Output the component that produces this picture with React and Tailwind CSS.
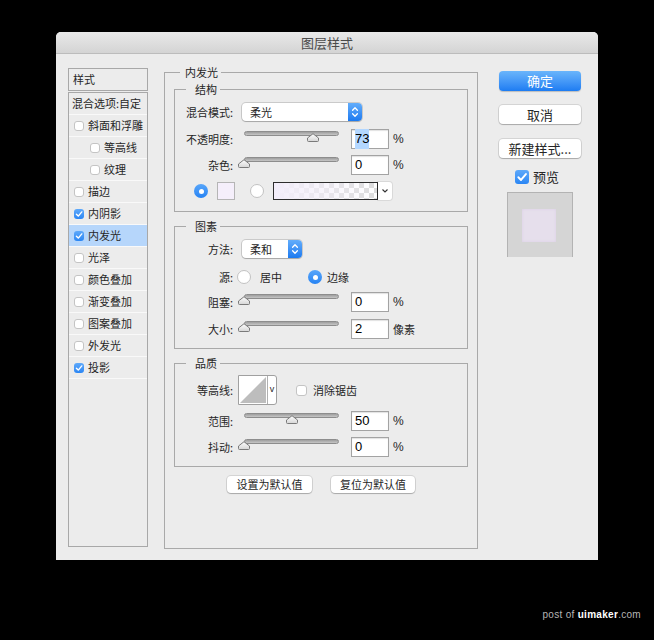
const layers = [
  { name: "斜面和浮雕" },
  { name: "等高线", indent: true },
  { name: "纹理", indent: true },
  { name: "描边" },
  { name: "内阴影", checked: true },
  { name: "内发光", checked: true, selected: true },
  { name: "光泽" },
  { name: "颜色叠加" },
  { name: "渐变叠加" },
  { name: "图案叠加" },
  { name: "外发光" },
  { name: "投影", checked: true },
];

const Check = ({ checked, size = "w-[10px] h-[10px]" }) =>
  checked ? (
    <span className={`${size} flex shrink-0 items-center justify-center rounded-[3px] bg-gradient-to-b from-[#5ea9fa] to-[#2a86f4]`}>
      <svg viewBox="0 0 10 10" className="h-full w-full">
        <path d="M2.4 5.2 L4.3 7.1 L7.8 2.9" fill="none" stroke="#fff" strokeWidth="1.4" strokeLinecap="round" strokeLinejoin="round" />
      </svg>
    </span>
  ) : (
    <span className={`${size} block shrink-0 rounded-[3px] border border-[#c4c4c4] bg-white`} />
  );

const Radio = ({ on }) =>
  on ? (
    <span className="flex h-[14px] w-[14px] shrink-0 items-center justify-center rounded-full bg-gradient-to-b from-[#58a6fa] to-[#2583f3]">
      <span className="h-[5px] w-[5px] rounded-full bg-white" />
    </span>
  ) : (
    <span className="block h-[14px] w-[14px] shrink-0 rounded-full border border-[#c2c2c2] bg-white" />
  );

const Label = ({ children }) => (
  <span className="flex w-[47px] shrink-0 justify-end whitespace-nowrap">{children}</span>
);

const Thumb = () => (
  <svg width="12" height="9" viewBox="0 0 12 9">
    <defs>
      <linearGradient id="thumb" x1="0" y1="0" x2="0" y2="1">
        <stop offset="0" stopColor="#fefefe" />
        <stop offset="1" stopColor="#d6d6d6" />
      </linearGradient>
    </defs>
    <path d="M1.5 8.5 Q0.5 8.5 0.5 7.5 V5 L6 0.7 L11.5 5 V7.5 Q11.5 8.5 10.5 8.5 Z" fill="url(#thumb)" stroke="#7a7a7a" strokeWidth="1" />
  </svg>
);

const Slider = ({ value }) => (
  <div className="relative ml-[11px] h-[20px] w-[95px] shrink-0">
    <div className="mt-[2px] h-[5px] rounded-full border border-[#8d8d8d] bg-gradient-to-b from-[#9e9e9e] to-[#c6c6c6]" />
    <div className="absolute top-[4px]" style={{ left: value * 0.95 - 6 }}>
      <Thumb />
    </div>
  </div>
);

const Field = ({ value, selected }) => (
  <div className="ml-[12px] flex h-[20px] w-[38px] shrink-0 items-center border border-[#a3a3a3] bg-white pl-[3px] font-['Liberation_Sans',sans-serif] text-[13px] text-black shadow-[inset_0_1px_1px_rgba(0,0,0,0.12)]">
    <span className={selected ? "bg-[#b3d7ff]" : ""}>{value}</span>
  </div>
);

const Percent = () => <span className="ml-[4px] font-['Liberation_Sans',sans-serif] text-[12px]">%</span>;

const Stepper = () => (
  <span className="flex w-[14px] items-center justify-center rounded-r-[4px] bg-gradient-to-b from-[#62adfb] to-[#1a7af0]">
    <svg width="14" height="18" viewBox="0 0 14 18">
      <path d="M4.6 7.2 L7 4.8 L9.4 7.2 M4.6 10.8 L7 13.2 L9.4 10.8" fill="none" stroke="#fff" strokeWidth="1.3" strokeLinecap="round" strokeLinejoin="round" />
    </svg>
  </span>
);

const Select = ({ value, width }) => (
  <div className={`ml-[9px] flex h-[18px] shrink-0 rounded-[4px] bg-white shadow-[0_0_0_1px_rgba(0,0,0,0.14),0_1px_1px_rgba(0,0,0,0.18)] ${width}`}>
    <span className="flex-1 pl-[8px] leading-[18px]">{value}</span>
    <Stepper />
  </div>
);

const Group = ({ title, outer, className = "", children }) => (
  <fieldset className={`border border-[#a9a9a9] ${className}`}>
    <legend className={outer ? "ml-[15px] pl-[5px] pr-[3px] leading-[16px]" : "ml-[11px] pl-[9px] pr-[3px] leading-[16px]"}>
      {title}
    </legend>
    {children}
  </fieldset>
);

const SmallButton = ({ children, width }) => (
  <button className={`h-[17px] rounded-[4px] bg-white leading-[17px] shadow-[0_0_0_1px_rgba(0,0,0,0.1),0_1px_1px_rgba(0,0,0,0.2)] ${width}`}>
    {children}
  </button>
);

export default function App() {
  return (
    <div className="h-[640px] bg-black pl-[56px] pt-[32px] font-['Noto_Sans_CJK_SC',sans-serif] text-[11px] text-[#262626]">
      <div className="flex h-[528px] w-[542px] flex-col overflow-hidden rounded-t-[5px] bg-[#ececec]">
        <div className="flex h-[22px] shrink-0 items-center justify-center border-b border-[#bcbcbc] bg-gradient-to-b from-[#e9e9e9] to-[#d4d4d4] text-[13px] text-[#4a4a4a]">
          图层样式
        </div>

        <div className="flex">
          {/* styles list */}
          <div className="ml-[12px] mt-[14px] w-[80px] shrink-0">
            <div className="h-[23px] border border-[#a8a8a8] pl-[4px] pt-[1px] leading-[18px]">样式</div>
            <div className="mt-[1px] h-[455px] border border-[#a8a8a8]">
              <div className="flex h-[22px] items-center border-b border-[#f9f9f9] pl-[3px]">混合选项:自定</div>
              {layers.map((l) => (
                <div
                  key={l.name}
                  className={`flex h-[22px] items-center gap-[4px] border-b border-[#f9f9f9] ${l.indent ? "pl-[21px]" : "pl-[5px]"} ${l.selected ? "bg-[#b6d6fb]" : ""}`}
                >
                  <Check checked={l.checked} />
                  <span>{l.name}</span>
                </div>
              ))}
            </div>
          </div>

          {/* settings */}
          <Group title="内发光" outer className="ml-[16px] mt-[10px] w-[314px] shrink-0">
            <div className="px-[9px] pb-[55px] pt-[1px]">
              <Group title="结构">
                <div className="pb-[11px] pl-[11px]">
                  <div className="mt-[6px] flex h-[18px] items-center">
                    <Label>混合模式:</Label>
                    <Select value="柔光" width="w-[120px]" />
                  </div>
                  <div className="mt-[8px] flex h-[20px] items-center">
                    <Label>不透明度:</Label>
                    <Slider value={73} />
                    <Field value="73" selected />
                    <Percent />
                  </div>
                  <div className="mt-[6px] flex h-[20px] items-center">
                    <Label>杂色:</Label>
                    <Slider value={0} />
                    <Field value="0" />
                    <Percent />
                  </div>
                  <div className="mt-[7px] flex h-[18px] items-center">
                    <span className="ml-[8px] flex">
                      <Radio on />
                    </span>
                    <span className="ml-[9px] h-[18px] w-[18px] border border-[#b5b5b5] bg-[#f5effb]" />
                    <span className="ml-[15px] flex">
                      <Radio />
                    </span>
                    <span className="ml-[9px] h-[18px] w-[105px] border border-[#2d2d2d] bg-[conic-gradient(#dcdcdc_25%,#ffffff_0_50%,#dcdcdc_0_75%,#ffffff_0)] bg-[length:10px_10px]">
                      <span className="block h-full w-full bg-gradient-to-r from-[#f3eefa] via-[#f3eefa]/60 to-transparent" />
                    </span>
                    <span className="flex h-[18px] w-[14px] items-center justify-center rounded-r-[3px] bg-white shadow-[0_0_0_1px_rgba(0,0,0,0.08)]">
                      <svg width="8" height="6" viewBox="0 0 8 6">
                        <path d="M1.5 1.5 L4 4 L6.5 1.5" fill="none" stroke="#333" strokeWidth="1.1" />
                      </svg>
                    </span>
                  </div>
                </div>
              </Group>

              <Group title="图素" className="mt-[6px]">
                <div className="pb-[9px] pl-[11px]">
                  <div className="mt-[6px] flex h-[18px] items-center">
                    <Label>方法:</Label>
                    <Select value="柔和" width="w-[60px]" />
                  </div>
                  <div className="mt-[10px] flex h-[18px] items-center">
                    <Label>源:</Label>
                    <span className="ml-[4px] flex">
                      <Radio />
                    </span>
                    <span className="ml-[9px] w-[24px] whitespace-nowrap">居中</span>
                    <span className="ml-[24px] flex">
                      <Radio on />
                    </span>
                    <span className="ml-[5px]">边缘</span>
                  </div>
                  <div className="mt-[6px] flex h-[20px] items-center">
                    <Label>阻塞:</Label>
                    <Slider value={0} />
                    <Field value="0" />
                    <Percent />
                  </div>
                  <div className="mt-[7px] flex h-[20px] items-center">
                    <Label>大小:</Label>
                    <Slider value={0} />
                    <Field value="2" />
                    <span className="ml-[4px]">像素</span>
                  </div>
                </div>
              </Group>

              <Group title="品质" className="mt-[6px]">
                <div className="pb-[9px] pl-[11px]">
                  <div className="mt-[4px] flex h-[30px] items-center">
                    <Label>等高线:</Label>
                    <div className="ml-[5px] flex h-[30px] w-[39px] rounded-r-[3px] border border-[#a0a0a0] bg-white">
                      <svg width="28" height="28" viewBox="0 0 28 28" className="shrink-0">
                        <polygon points="1,27 27,1 27,27" fill="#bdbdbd" />
                      </svg>
                      <span className="flex flex-1 items-center justify-center border-l border-[#b0b0b0] font-['Liberation_Sans',sans-serif] text-[9px]">
                        v
                      </span>
                    </div>
                    <span className="ml-[19px] flex">
                      <Check size="w-[11px] h-[11px]" />
                    </span>
                    <span className="ml-[6px]">消除锯齿</span>
                  </div>
                  <div className="mt-[6px] flex h-[20px] items-center">
                    <Label>范围:</Label>
                    <Slider value={50} />
                    <Field value="50" />
                    <Percent />
                  </div>
                  <div className="mt-[6px] flex h-[20px] items-center">
                    <Label>抖动:</Label>
                    <Slider value={0} />
                    <Field value="0" />
                    <Percent />
                  </div>
                </div>
              </Group>

              <div className="mt-[9px] flex justify-center gap-[19px]">
                <SmallButton width="w-[85px]">设置为默认值</SmallButton>
                <SmallButton width="w-[84px]">复位为默认值</SmallButton>
              </div>
            </div>
          </Group>

          {/* actions */}
          <div className="ml-[21px] mt-[17px] flex w-[82px] shrink-0 flex-col text-[13px]">
            <button className="h-[20px] rounded-[4px] bg-gradient-to-b from-[#6ab5fb] to-[#1c7cf2] text-white shadow-[0_1px_1px_rgba(0,0,0,0.2)]">
              确定
            </button>
            <button className="mt-[14px] h-[19px] rounded-[4px] bg-white shadow-[0_0_0_1px_rgba(0,0,0,0.1),0_1px_1px_rgba(0,0,0,0.2)]">
              取消
            </button>
            <button className="mt-[15px] h-[19px] rounded-[4px] bg-white shadow-[0_0_0_1px_rgba(0,0,0,0.1),0_1px_1px_rgba(0,0,0,0.2)]">
              新建样式...
            </button>
            <div className="mt-[12px] flex h-[14px] items-center pl-[16px]">
              <Check checked size="w-[14px] h-[14px]" />
              <span className="ml-[4px]">预览</span>
            </div>
            <div className="ml-[8px] mt-[8px] h-[65px] w-[66px] border-x border-t border-[#b3b3b3] bg-[#d5d5d5] pl-[14px] pt-[16px]">
              <div className="h-[33px] w-[34px] bg-[#e6dfec] shadow-[inset_0_0_3px_#d9cee4]" />
            </div>
          </div>
        </div>
      </div>

      <div className="mt-[49px] flex justify-end pr-[13px] font-['Liberation_Sans',sans-serif] text-[10px] leading-[12px] tracking-[0.3px] text-[#b5b5b5]">
        <span>
          post of <b className="text-white">uimaker</b>.com
        </span>
      </div>
    </div>
  );
}
